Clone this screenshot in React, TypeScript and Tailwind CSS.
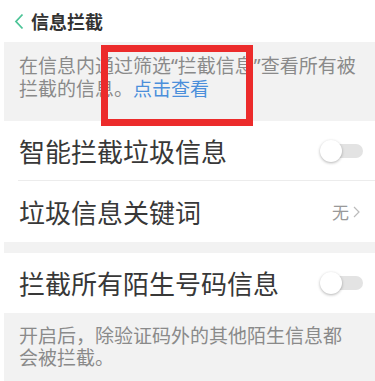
const FONT = { fontFamily: '"Noto Sans CJK SC", "Noto Sans", sans-serif' };
const LATIN = { fontFamily: '"Noto Sans", "Liberation Sans", sans-serif' };

function Toggle() {
  return (
    <div className="relative w-[43px] h-[22px] shrink-0">
      <div className="absolute right-0 top-[4px] w-[34px] h-[14px] rounded-full bg-[#e3e3e3]" />
      <div className="absolute left-0 top-0 w-[22px] h-[22px] rounded-full bg-white shadow-[0_1px_3px_rgba(0,0,0,0.3)]" />
    </div>
  );
}

function Row({ label, right, divider }: { label: string; right: React.ReactNode; divider?: boolean }) {
  return (
    <div className="bg-white pl-[18px]">
      <div
        className={
          "flex items-center justify-between h-[60px] pr-[12px] " +
          (divider ? "border-b border-[#ececec]" : "")
        }
      >
        <span className="text-[26px] leading-none text-[#383838] pl-[1px]">{label}</span>
        {right}
      </div>
    </div>
  );
}

export default function App() {
  return (
    <div className="relative w-[375px] h-[381px] bg-white overflow-hidden" style={FONT}>
      {/* header */}
      <div className="h-[42px] flex items-center pl-[14px]">
        <svg width="10" height="17" viewBox="0 0 10 17" className="shrink-0">
          <path d="M8.5 1.5 L2 8.5 L8.5 15.5" fill="none" stroke="#4cc497" strokeWidth="1.8" />
        </svg>
        <span className="ml-[7px] text-[18px] font-bold leading-none text-[#333]">信息拦截</span>
      </div>

      {/* top hint */}
      <div className="ml-[4px] h-[79px] bg-[#f2f2f2] pt-[12px] pl-[15px] text-[19px] leading-[21px] text-[#8a8a8a]">
        <div className="whitespace-nowrap">
          在信息内通过筛选<span style={LATIN}>“</span>拦截信息<span style={LATIN}>”</span>查看所有被
        </div>
        <div className="whitespace-nowrap">
          拦截的信息。<span className="text-[#4b8fdb]">点击查看</span>
        </div>
      </div>

      <Row label="智能拦截垃圾信息" right={<Toggle />} divider />
      <div className="bg-white pl-[18px]">
        <div className="flex items-center justify-between h-[61px] pr-[15px]">
          <span className="text-[26px] leading-none text-[#383838] pl-[1px]">垃圾信息关键词</span>
          <div className="flex items-center gap-[4px]">
            <span className="text-[17px] leading-none text-[#999]">无</span>
            <svg width="7" height="12" viewBox="0 0 7 12">
              <path d="M1 1 L6 6 L1 11" fill="none" stroke="#bbb" strokeWidth="1.2" />
            </svg>
          </div>
        </div>
      </div>

      <div className="ml-[4px] h-[11px] bg-[#f2f2f2]" />

      <Row label="拦截所有陌生号码信息" right={<Toggle />} />

      {/* bottom hint */}
      <div className="ml-[4px] h-[68px] bg-[#f2f2f2] pt-[11px] pl-[15px] text-[19px] leading-[22px] text-[#8a8a8a]">
        <div className="whitespace-nowrap">开启后，除验证码外的其他陌生信息都</div>
        <div className="whitespace-nowrap">会被拦截。</div>
      </div>

      {/* red annotation box */}
      <div className="absolute left-[101px] top-[45px] w-[152px] h-[81px] border-[7px] border-[#ec2b2b]" />
    </div>
  );
}
